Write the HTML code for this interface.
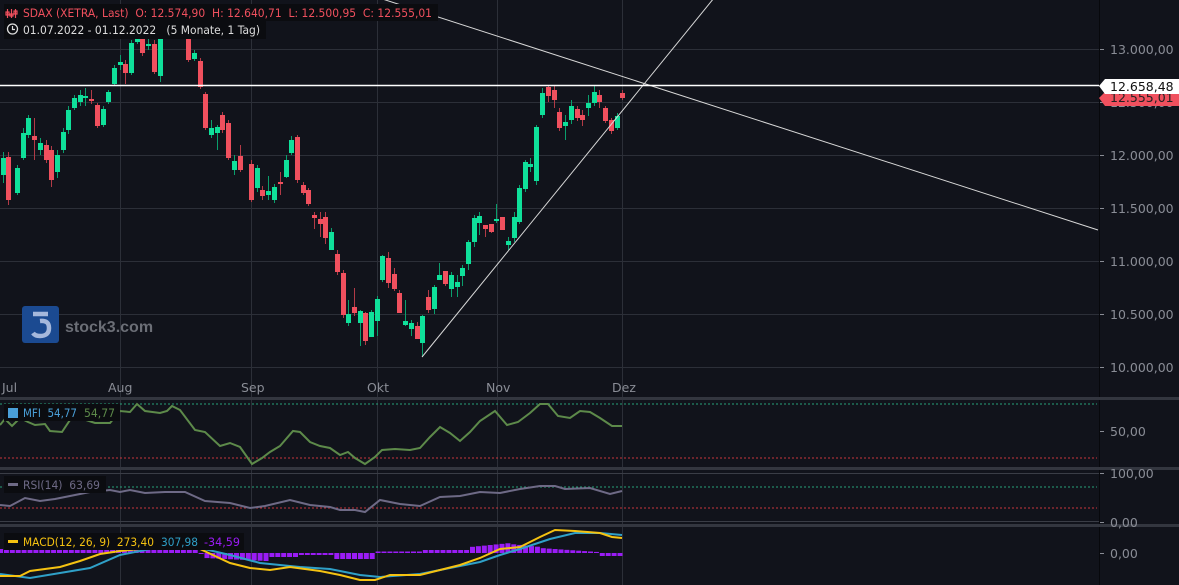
<!DOCTYPE html>
<html><head><meta charset="utf-8"><style>
html,body{margin:0;padding:0;background:#11131b;width:1179px;height:585px;overflow:hidden;font-family:"Liberation Sans","DejaVu Sans",sans-serif}
svg{display:block}
</style></head><body>
<svg id="s" width="1179" height="585" xmlns="http://www.w3.org/2000/svg" font-family="DejaVu Sans, Liberation Sans, sans-serif">
<rect width="1179" height="585" fill="#11131b"/>
<g id="grid" stroke="#2c2f38" stroke-width="1"></g>
<g id="cand"></g>
<line x1="370" y1="-5" x2="1098" y2="230" stroke="#d8d8d8" stroke-width="1"/>
<line x1="422" y1="357" x2="714" y2="-2" stroke="#d8d8d8" stroke-width="1"/>
<line x1="0" y1="85.5" x2="1099" y2="85.5" stroke="#ffffff" stroke-width="1.5"/>
<line x1="1099.5" y1="0" x2="1099.5" y2="585" stroke="#07080c" stroke-width="1"/>
<rect x="0" y="397" width="1179" height="3" fill="#33363f"/>
<rect x="0" y="467" width="1179" height="3" fill="#33363f"/>
<rect x="0" y="524" width="1179" height="3" fill="#33363f"/>
<g fill="#8a8d96" font-size="12.5" id="ax"></g>
<g font-size="12.5">
<path d="M1099 98 l6 -6 h74 v14 h-74 z" fill="#f0505e"/>
<text x="1110" y="102" fill="#222">12.555,01</text>
<path d="M1099 86 l6 -7 h74 v15 h-74 z" fill="#ffffff"/>
<text x="1110" y="91" fill="#111">12.658,48</text>
</g>
<g fill="#8a8d96" font-size="12.5">
<text x="2" y="392">Jul</text><text x="108" y="392">Aug</text><text x="241" y="392">Sep</text><text x="367" y="392">Okt</text><text x="486" y="392">Nov</text><text x="612" y="392">Dez</text>
</g>
<rect x="22" y="306" width="37" height="37" rx="3" fill="#1b4a91"/>
<path d="M33 314 H48 M40 321 Q49 320 49 328 Q49 336 40 336 Q35 336 33 333" fill="none" stroke="#a5b8dc" stroke-width="4.5"/>
<text x="65" y="332" font-size="16" font-weight="bold" fill="#6b6e76" font-family="Liberation Sans, sans-serif">stock3.com</text>
<line x1="0" y1="404" x2="1097" y2="404" stroke="#26a07a" stroke-dasharray="2,2"/>
<line x1="0" y1="458" x2="1097" y2="458" stroke="#c8343e" stroke-dasharray="2,2"/>
<polyline id="mfi" fill="none" stroke="#5d8a4a" stroke-width="2"/>
<line x1="0" y1="473.5" x2="1099" y2="473.5" stroke="#3a3d46"/>
<line x1="0" y1="521.5" x2="1099" y2="521.5" stroke="#3a3d46"/>
<line x1="0" y1="487" x2="1097" y2="487" stroke="#26a07a" stroke-dasharray="2,2"/>
<line x1="0" y1="508" x2="1097" y2="508" stroke="#c8343e" stroke-dasharray="2,2"/>
<polyline id="rsi" fill="none" stroke="#6e6a86" stroke-width="2"/>
<g id="hist" fill="#9a1cf5"></g>
<polyline id="mb" fill="none" stroke="#2fa0c8" stroke-width="2"/>
<polyline id="my" fill="none" stroke="#f5c211" stroke-width="2"/>
<g fill="#8a8d96" font-size="12.5">
<text x="1110" y="436">50,00</text><line x1="1100" y1="431.5" x2="1104" y2="431.5" stroke="#8a8d96"/>
<text x="1110" y="478">100,00</text><line x1="1100" y1="473.5" x2="1104" y2="473.5" stroke="#8a8d96"/>
<text x="1110" y="527">0,00</text><line x1="1100" y1="522.5" x2="1104" y2="522.5" stroke="#8a8d96"/>
<text x="1110" y="558">0,00</text><line x1="1100" y1="553.5" x2="1104" y2="553.5" stroke="#8a8d96"/>
</g>
<rect x="4" y="4" width="434" height="17" fill="#0b0c10"/>
<rect x="4" y="21" width="262" height="18" fill="#0b0c10"/>
<g fill="#f0505e" font-size="11.5">
<g stroke="#f0505e" stroke-width="1.2" fill="none"><line x1="7.5" y1="9" x2="7.5" y2="18"/><line x1="11.5" y1="9" x2="11.5" y2="18"/><line x1="15.5" y1="9" x2="15.5" y2="18"/><rect x="6" y="12" width="3" height="3"/><rect x="10" y="14" width="3" height="2"/><rect x="14" y="11" width="3" height="3"/></g>
<text x="23" y="17" textLength="409" lengthAdjust="spacingAndGlyphs" xml:space="preserve">SDAX (XETRA, Last)  O: 12.574,90  H: 12.640,71  L: 12.500,95  C: 12.555,01</text>
</g>
<circle cx="12.5" cy="29" r="5" fill="none" stroke="#ddd" stroke-width="1.3"/>
<path d="M12.5 26 V29.5 H15" fill="none" stroke="#ddd" stroke-width="1.2"/>
<text x="23" y="34" fill="#ddd" font-size="11.5" textLength="237" lengthAdjust="spacingAndGlyphs" xml:space="preserve">01.07.2022 - 01.12.2022   (5 Monate, 1 Tag)</text>
<rect x="4" y="404" width="116" height="17" fill="#0b0c10"/>
<rect x="8" y="408" width="10" height="10" fill="#4a9fd8"/>
<text x="23" y="417" font-size="11.5" fill="#4a9fd8" textLength="54" lengthAdjust="spacingAndGlyphs" xml:space="preserve">MFI  54,77</text><text x="84" y="417" font-size="11.5" fill="#5d8a4a" textLength="31" lengthAdjust="spacingAndGlyphs">54,77</text>
<rect x="4" y="476" width="102" height="17" fill="#0b0c10"/>
<rect x="8" y="483" width="10" height="3" fill="#6e6a86"/>
<text x="23" y="489" font-size="11.5" fill="#6e6a86" textLength="77" lengthAdjust="spacingAndGlyphs" xml:space="preserve">RSI(14)  63,69</text>
<rect x="4" y="533" width="240" height="17" fill="#0b0c10"/>
<rect x="8" y="540" width="10" height="3" fill="#f5c211"/>
<text x="23" y="546" font-size="11.5" fill="#f5c211" textLength="131" lengthAdjust="spacingAndGlyphs" xml:space="preserve">MACD(12, 26, 9)  273,40</text>
<text x="161" y="546" font-size="11.5" fill="#2fa0c8" textLength="37" lengthAdjust="spacingAndGlyphs">307,98</text><text x="204" y="546" font-size="11.5" fill="#9a1cf5" textLength="36" lengthAdjust="spacingAndGlyphs">-34,59</text>
</svg>
<script>
var NS="http://www.w3.org/2000/svg";
function el(p,t,a){var e=document.createElementNS(NS,t);for(var k in a)e.setAttribute(k,a[k]);p.appendChild(e);return e;}
var g=document.getElementById('grid');
[49,102,155,208,261,314,367].forEach(function(y){el(g,'line',{x1:0,x2:1099,y1:y+.5,y2:y+.5});});
[120,251,377,497,622].forEach(function(x){el(g,'line',{x1:x+.5,x2:x+.5,y1:0,y2:585});});
var ax=document.getElementById('ax');
var labs=['13.000,00','12.500,00','12.000,00','11.500,00','11.000,00','10.500,00','10.000,00'];
[49,102,155,208,261,314,367].forEach(function(y,i){el(ax,'text',{x:1110,y:y+5}).textContent=labs[i];el(ax,'line',{x1:1100,x2:1104,y1:y+.5,y2:y+.5,stroke:'#8a8d96'});});
var C=[[3,158,175,152,183,1],[8,157,200,152,205,0],[17,168,193,165,195,1],[23,133,158,128,160,1],[28,118,135,115,138,1],[34,136,140,118,160,0],[40,143,150,138,155,1],[46,145,160,140,163,0],[51,150,180,146,187,0],[57,155,172,150,178,1],[63,132,150,128,153,1],[68,110,130,106,134,1],[74,98,108,95,110,1],[80,95,102,90,106,1],[85,96,98,88,106,1],[91,99,101,90,104,0],[97,105,126,103,128,0],[103,109,125,106,127,1],[108,92,102,90,104,1],[114,68,84,65,86,1],[120,62,65,55,70,1],[125,64,73,60,84,0],[131,43,73,40,75,1],[137,37,42,30,44,1],[142,36,53,33,56,0],[148,44,45,38,50,1],[154,44,72,40,74,0],[160,36,76,33,82,1],[188,36,60,33,62,0],[194,53,59,50,61,1],[200,61,87,58,89,0],[205,94,128,92,130,0],[211,128,135,120,138,1],[217,127,133,125,150,1],[222,115,130,112,133,0],[228,123,158,120,160,0],[234,161,170,155,175,1],[240,156,170,145,172,0],[251,164,200,160,202,0],[257,168,188,165,192,1],[262,190,196,186,200,0],[268,191,195,176,200,1],[274,187,200,184,203,1],[280,182,184,172,195,0],[286,160,177,155,178,1],[291,140,153,136,155,1],[297,137,180,135,183,0],[303,185,193,182,195,0],[308,190,204,188,206,0],[314,215,218,212,229,0],[320,219,224,212,237,0],[325,217,238,212,244,0],[331,232,250,228,250,1],[337,254,272,250,275,0],[343,273,315,270,318,0],[348,314,323,300,326,1],[354,307,313,288,316,0],[360,311,323,310,346,1],[365,313,341,312,345,0],[371,312,337,310,337,1],[377,299,321,296,336,1],[382,256,280,255,282,1],[388,258,283,252,288,0],[394,274,289,268,291,0],[399,293,313,290,313,0],[405,321,325,300,326,1],[411,323,329,320,336,1],[417,326,339,322,339,0],[422,316,343,315,357,1],[428,297,310,290,313,0],[434,287,309,285,314,1],[439,275,280,263,280,1],[445,271,284,271,286,0],[451,275,289,272,297,1],[457,282,287,275,297,1],[462,268,276,265,286,1],[468,242,264,240,270,1],[474,218,242,215,247,1],[479,216,223,212,235,1],[485,225,229,225,237,0],[491,224,232,224,233,0],[496,219,221,204,223,1],[502,217,230,217,230,0],[508,241,245,237,250,1],[514,217,238,212,242,1],[519,188,222,185,224,1],[525,162,189,160,192,1],[530,164,167,158,172,1],[536,127,181,125,185,1],[542,93,115,88,118,1],[548,87,96,85,102,0],[554,90,100,86,108,0],[559,112,128,108,131,0],[565,122,126,115,140,1],[571,106,120,100,124,1],[577,109,118,106,121,0],[582,115,120,110,126,0],[588,103,108,95,116,1],[594,92,103,85,106,1],[599,95,102,90,108,0],[605,108,121,106,123,0],[611,120,131,118,134,0],[617,116,128,113,130,1],[622,93,98,90,100,0]];
var cg=document.getElementById('cand');
C.forEach(function(c){var col=c[5]?'#0fe09a':'#f0505e';var wc=c[5]?'#0a9e6c':'#b23a46';
el(cg,'line',{x1:c[0]+.5,x2:c[0]+.5,y1:c[3],y2:c[4],stroke:wc,'stroke-width':1});
el(cg,'rect',{x:c[0]-2,y:c[1],width:5,height:Math.max(2,c[2]-c[1]),fill:col});});
function pts(a){return a.map(function(p){return p[0]+','+p[1]}).join(' ');}
document.getElementById('mfi').setAttribute('points',pts([[0,425],[5,419],[12,426],[20,418],[28,422],[35,425],[45,424],[50,431],[62,432],[70,420],[80,418],[95,423],[110,423],[120,411],[130,412],[137,404],[145,411],[160,413],[167,411],[172,406],[180,410],[195,430],[205,432],[220,446],[230,443],[240,447],[252,464],[262,458],[270,452],[280,446],[293,431],[300,432],[310,442],[320,446],[330,448],[340,455],[348,452],[355,458],[365,464],[375,457],[382,450],[395,449],[410,450],[420,448],[430,437],[440,427],[450,433],[460,441],[470,432],[480,421],[495,411],[507,425],[518,422],[530,413],[540,404],[548,404],[558,416],[570,418],[580,411],[590,412],[600,418],[612,426],[622,426]]));
document.getElementById('rsi').setAttribute('points',pts([[0,505],[10,506],[25,498],[40,501],[55,499],[70,496],[90,492],[110,490],[120,492],[130,490],[145,493],[165,492],[185,492],[205,501],[230,503],[250,508],[265,506],[290,500],[310,505],[330,507],[340,510],[355,510],[365,512],[380,500],[400,504],[420,506],[440,497],[460,496],[480,492],[500,493],[520,489],[540,486],[555,486],[565,489],[590,488],[610,494],[622,491]]));
document.getElementById('my').setAttribute('points',pts([[0,576],[20,576],[30,571],[60,567],[80,561],[100,554],[120,551],[150,548],[200,549],[230,563],[250,568],[270,570],[290,567],[320,571],[340,575],[360,580],[375,580],[390,575],[420,575],[440,570],[460,565],[480,558],[500,549],[520,547],[540,537],[555,530],[575,531],[600,533],[612,537],[622,538]]));
document.getElementById('mb').setAttribute('points',pts([[0,574],[30,578],[60,573],[90,568],[120,555],[150,549],[200,548],[230,555],[260,563],[300,567],[330,569],[360,575],[380,577],[420,574],[450,568],[480,562],[500,555],[520,549],[550,539],[575,533],[600,533],[622,535]]));
var hg=document.getElementById('hist');
for(var x=0;x<=622;x+=5.9){var h;
if(x<195)h=-4; else if(x<205)h=1; else if(x<270)h=5+(x-205)*0.05; else if(x<300)h=4; else if(x<335)h=2; else if(x<375)h=6; else if(x<420)h=-1.5; else if(x<470)h=-3; else if(x<540)h=-6-(x<510?(x-470)*0.1:(540-x)*0.1); else if(x<600)h=-5+(x-540)*0.07; else h=3;
var y=553;el(hg,'rect',{x:x-2,y:h<0?y+h:y,width:5,height:Math.max(1,Math.abs(h))});}
</script>
</body></html>
